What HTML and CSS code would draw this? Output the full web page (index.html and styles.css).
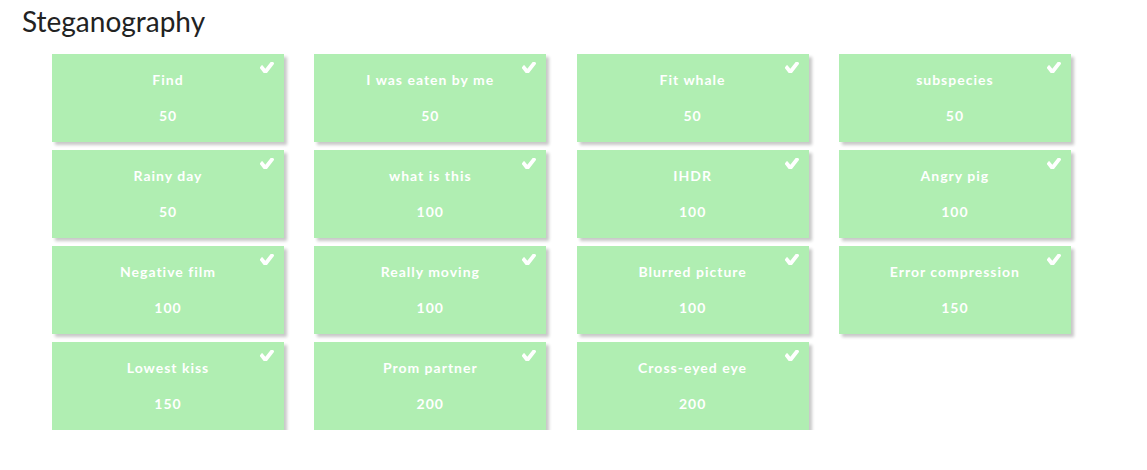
FILE: index.html
```html
<!DOCTYPE html>
<html>
<head>
<meta charset="utf-8">
<link rel="stylesheet" href="styles.css">
</head>
<body>
<div class="page">
  <h2 class="title">Steganography</h2>
  <div class="grid">
    <div class="card"><svg class="check" viewBox="128 430 1543 956" preserveAspectRatio="none"><path d="M1671 566q0 40-28 68l-724 724-136 136q-28 28-68 28t-68-28l-136-136-362-362q-28-28-28-68t28-68l136-136q28-28 68-28t68 28l294 295 656-657q28-28 68-28t68 28l136 136q28 28 28 68z"/></svg><div class="name">Find</div><div class="pts">50</div></div>
    <div class="card"><svg class="check" viewBox="128 430 1543 956" preserveAspectRatio="none"><path d="M1671 566q0 40-28 68l-724 724-136 136q-28 28-68 28t-68-28l-136-136-362-362q-28-28-28-68t28-68l136-136q28-28 68-28t68 28l294 295 656-657q28-28 68-28t68 28l136 136q28 28 28 68z"/></svg><div class="name">I was eaten by me</div><div class="pts">50</div></div>
    <div class="card"><svg class="check" viewBox="128 430 1543 956" preserveAspectRatio="none"><path d="M1671 566q0 40-28 68l-724 724-136 136q-28 28-68 28t-68-28l-136-136-362-362q-28-28-28-68t28-68l136-136q28-28 68-28t68 28l294 295 656-657q28-28 68-28t68 28l136 136q28 28 28 68z"/></svg><div class="name">Fit whale</div><div class="pts">50</div></div>
    <div class="card"><svg class="check" viewBox="128 430 1543 956" preserveAspectRatio="none"><path d="M1671 566q0 40-28 68l-724 724-136 136q-28 28-68 28t-68-28l-136-136-362-362q-28-28-28-68t28-68l136-136q28-28 68-28t68 28l294 295 656-657q28-28 68-28t68 28l136 136q28 28 28 68z"/></svg><div class="name">subspecies</div><div class="pts">50</div></div>
    <div class="card"><svg class="check" viewBox="128 430 1543 956" preserveAspectRatio="none"><path d="M1671 566q0 40-28 68l-724 724-136 136q-28 28-68 28t-68-28l-136-136-362-362q-28-28-28-68t28-68l136-136q28-28 68-28t68 28l294 295 656-657q28-28 68-28t68 28l136 136q28 28 28 68z"/></svg><div class="name">Rainy day</div><div class="pts">50</div></div>
    <div class="card"><svg class="check" viewBox="128 430 1543 956" preserveAspectRatio="none"><path d="M1671 566q0 40-28 68l-724 724-136 136q-28 28-68 28t-68-28l-136-136-362-362q-28-28-28-68t28-68l136-136q28-28 68-28t68 28l294 295 656-657q28-28 68-28t68 28l136 136q28 28 28 68z"/></svg><div class="name">what is this</div><div class="pts">100</div></div>
    <div class="card"><svg class="check" viewBox="128 430 1543 956" preserveAspectRatio="none"><path d="M1671 566q0 40-28 68l-724 724-136 136q-28 28-68 28t-68-28l-136-136-362-362q-28-28-28-68t28-68l136-136q28-28 68-28t68 28l294 295 656-657q28-28 68-28t68 28l136 136q28 28 28 68z"/></svg><div class="name">IHDR</div><div class="pts">100</div></div>
    <div class="card"><svg class="check" viewBox="128 430 1543 956" preserveAspectRatio="none"><path d="M1671 566q0 40-28 68l-724 724-136 136q-28 28-68 28t-68-28l-136-136-362-362q-28-28-28-68t28-68l136-136q28-28 68-28t68 28l294 295 656-657q28-28 68-28t68 28l136 136q28 28 28 68z"/></svg><div class="name">Angry pig</div><div class="pts">100</div></div>
    <div class="card"><svg class="check" viewBox="128 430 1543 956" preserveAspectRatio="none"><path d="M1671 566q0 40-28 68l-724 724-136 136q-28 28-68 28t-68-28l-136-136-362-362q-28-28-28-68t28-68l136-136q28-28 68-28t68 28l294 295 656-657q28-28 68-28t68 28l136 136q28 28 28 68z"/></svg><div class="name">Negative film</div><div class="pts">100</div></div>
    <div class="card"><svg class="check" viewBox="128 430 1543 956" preserveAspectRatio="none"><path d="M1671 566q0 40-28 68l-724 724-136 136q-28 28-68 28t-68-28l-136-136-362-362q-28-28-28-68t28-68l136-136q28-28 68-28t68 28l294 295 656-657q28-28 68-28t68 28l136 136q28 28 28 68z"/></svg><div class="name">Really moving</div><div class="pts">100</div></div>
    <div class="card"><svg class="check" viewBox="128 430 1543 956" preserveAspectRatio="none"><path d="M1671 566q0 40-28 68l-724 724-136 136q-28 28-68 28t-68-28l-136-136-362-362q-28-28-28-68t28-68l136-136q28-28 68-28t68 28l294 295 656-657q28-28 68-28t68 28l136 136q28 28 28 68z"/></svg><div class="name">Blurred picture</div><div class="pts">100</div></div>
    <div class="card"><svg class="check" viewBox="128 430 1543 956" preserveAspectRatio="none"><path d="M1671 566q0 40-28 68l-724 724-136 136q-28 28-68 28t-68-28l-136-136-362-362q-28-28-28-68t28-68l136-136q28-28 68-28t68 28l294 295 656-657q28-28 68-28t68 28l136 136q28 28 28 68z"/></svg><div class="name">Error compression</div><div class="pts">150</div></div>
    <div class="card"><svg class="check" viewBox="128 430 1543 956" preserveAspectRatio="none"><path d="M1671 566q0 40-28 68l-724 724-136 136q-28 28-68 28t-68-28l-136-136-362-362q-28-28-28-68t28-68l136-136q28-28 68-28t68 28l294 295 656-657q28-28 68-28t68 28l136 136q28 28 28 68z"/></svg><div class="name">Lowest kiss</div><div class="pts">150</div></div>
    <div class="card"><svg class="check" viewBox="128 430 1543 956" preserveAspectRatio="none"><path d="M1671 566q0 40-28 68l-724 724-136 136q-28 28-68 28t-68-28l-136-136-362-362q-28-28-28-68t28-68l136-136q28-28 68-28t68 28l294 295 656-657q28-28 68-28t68 28l136 136q28 28 28 68z"/></svg><div class="name">Prom partner</div><div class="pts">200</div></div>
    <div class="card"><svg class="check" viewBox="128 430 1543 956" preserveAspectRatio="none"><path d="M1671 566q0 40-28 68l-724 724-136 136q-28 28-68 28t-68-28l-136-136-362-362q-28-28-28-68t28-68l136-136q28-28 68-28t68 28l294 295 656-657q28-28 68-28t68 28l136 136q28 28 28 68z"/></svg><div class="name">Cross-eyed eye</div><div class="pts">200</div></div>
  </div>
</div>
</body>
</html>
```

FILE: styles.css
```css
html, body {
  margin: 0;
  padding: 0;
  background: #fff;
}
body {
  font-family: Lato, "Open Sans", sans-serif;
}
.page {
  padding: 3px 0 0 22px;
}
.title {
  margin: 0;
  font-size: 28px;
  font-weight: 400;
  color: #222;
  line-height: 37px;
}
.grid {
  display: grid;
  grid-template-columns: repeat(4, 232px);
  column-gap: 30.3px;
  row-gap: 8px;
  margin: 14px 0 0 30px;
}
.card {
  position: relative;
  height: 88px;
  background: #b0eeb2;
  box-shadow: 3px 3px 3px rgba(0, 0, 0, 0.22);
  color: #fff;
  text-align: center;
  font-weight: 700;
  font-size: 14px;
  letter-spacing: 1px;
  line-height: 18px;
  padding-top: 17px;
  box-sizing: border-box;
}
.name {
  margin-bottom: 18px;
}
.check {
  position: absolute;
  top: 8px;
  right: 10px;
  width: 14px;
  height: 11px;
  fill: #fff;
}
```
